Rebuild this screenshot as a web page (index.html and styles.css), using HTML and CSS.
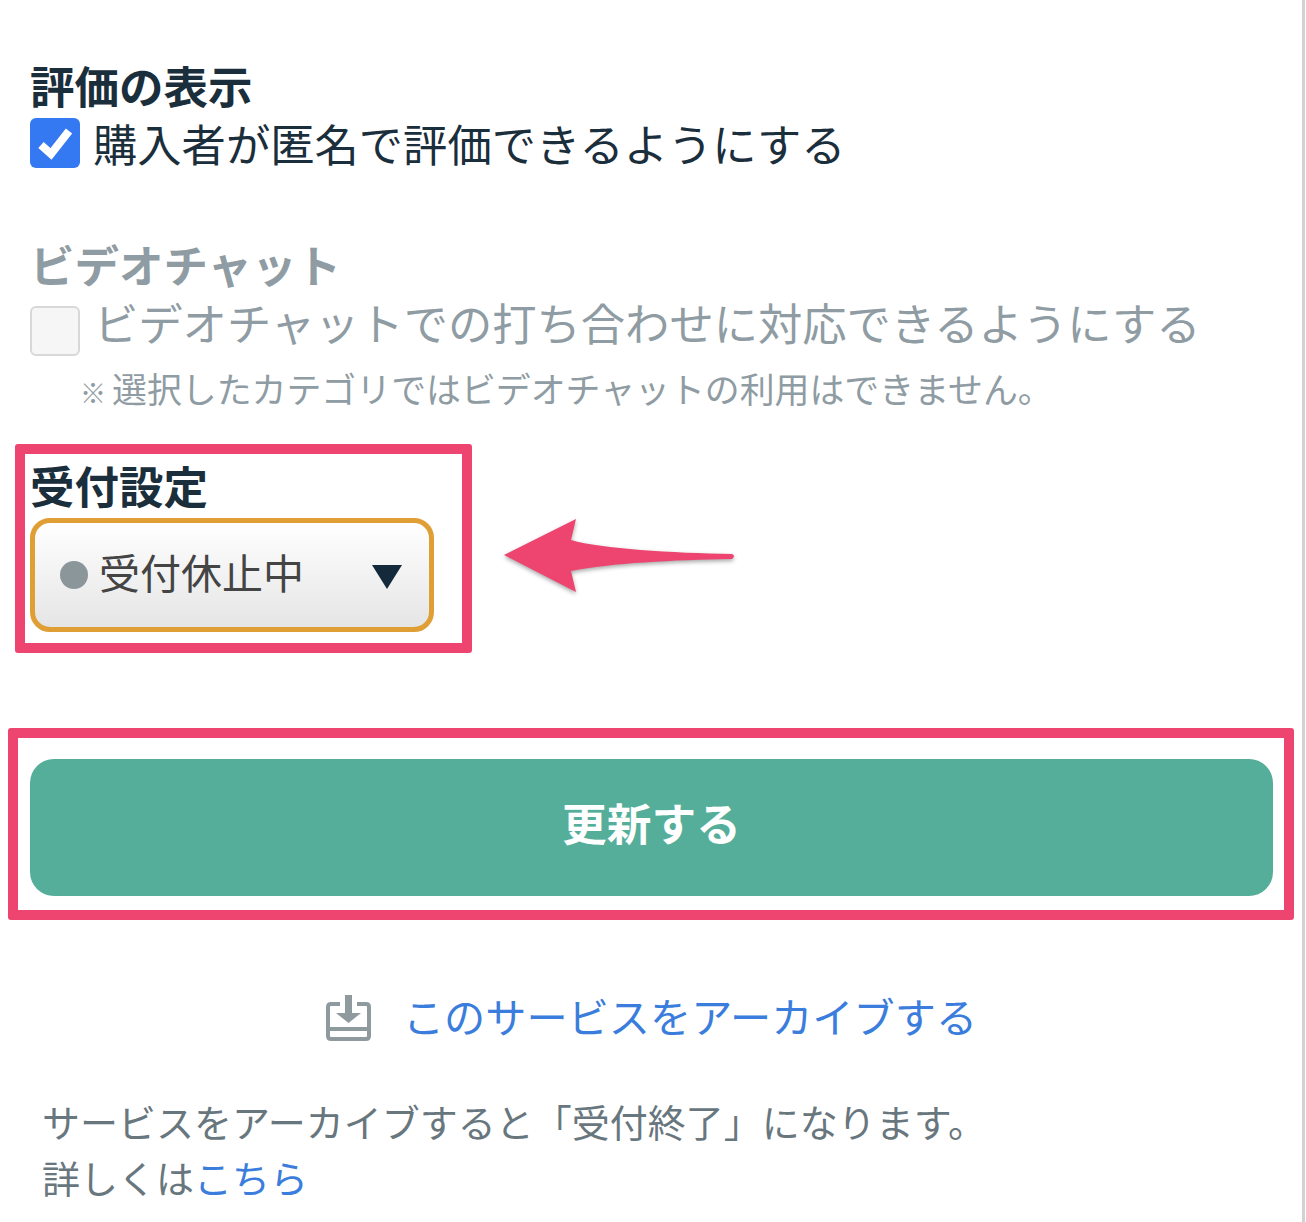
FILE: index.html
```html
<!DOCTYPE html>
<html lang="ja">
<head>
<meta charset="UTF-8">
<meta name="viewport" content="width=device-width, initial-scale=1.0">
<title>サービス編集</title>
<link rel="stylesheet" href="styles.css">
</head>
<body>
<div class="page">
    <section class="field field-review">
        <h2 class="field-title">評価の表示</h2>
        <div class="check-row">
            <span class="check check-on">
                <svg viewBox="0 0 50 50" width="50" height="50"><path d="M11 27 L21 36 L39 13" fill="none" stroke="#fff" stroke-width="8"/></svg>
            </span>
            <span class="check-label">購入者が匿名で評価できるようにする</span>
        </div>
    </section>

    <section class="field field-video">
        <h2 class="field-title">ビデオチャット</h2>
        <div class="check-row">
            <span class="check check-off"></span>
            <span class="check-label">ビデオチャットでの打ち合わせに対応できるようにする</span>
        </div>
        <p class="video-note"><span class="note-mark">※</span>選択したカテゴリではビデオチャットの利用はできません。</p>
    </section>

    <section class="mark-box status-box">
        <h2 class="field-title">受付設定</h2>
        <div class="status-select">
            <span class="status-dot"></span>
            <span class="status-text">受付休止中</span>
            <span class="status-caret"></span>
        </div>
    </section>

    <svg class="mark-arrow" viewBox="0 0 240 80" width="240" height="80">
        <path d="M2 36 L74 0 L69 21 C100 30 170 34 230 35 Q234 37 230 40 C170 41 110 44 69 52 L74 73 Z" fill="#ed4570"/>
    </svg>

    <div class="mark-box submit-box">
        <button class="submit-btn">更新する</button>
    </div>

    <a class="archive-link" href="#">
        <svg class="archive-icon" viewBox="0 0 45 46" width="45" height="46">
            <path d="M14 9 H5 Q2 9 2 12 V41 Q2 44 5 44 H40 Q43 44 43 41 V12 Q43 9 40 9 H31 M2 34 H43" fill="none" stroke="#8f9a9f" stroke-width="4"/>
            <path d="M19 0 H26 V18 H35 L22.5 28 L10 18 H19 Z" fill="#8f9a9f"/>
        </svg>
        <span class="archive-text">このサービスをアーカイブする</span>
    </a>

    <p class="archive-note">サービスをアーカイブすると「受付終了」になります。<br>詳しくは<a href="#">こちら</a></p>
</div>
</body>
</html>
```

FILE: styles.css
```css
body {
    margin: 0;
    background: #fff;
    color: #1a2e3b;
    font-family: "Noto Sans CJK JP", "Noto Sans", sans-serif;
}

.page {
    position: relative;
    box-sizing: border-box;
    width: 1305px;
    height: 1222px;
    padding-top: 58px;
    border-right: 3px solid #d2d2d2;
    overflow: hidden;
}

.field {
    padding-left: 30px;
}

.field-title {
    margin: 0 0 6px;
    font-size: 44.5px;
    font-weight: 700;
    line-height: 54px;
}

.check-row {
    display: flex;
    gap: 13px;
    height: 50px;
}

.check {
    box-sizing: border-box;
    flex: none;
    width: 50px;
    height: 50px;
    border-radius: 6px;
}

.check-on {
    background: #3579f2;
}

.check-on svg {
    display: block;
}

.check-off {
    margin-top: 9px;
    background: #f6f6f6;
    border: 2px solid #d8d8d8;
}

.check-label {
    font-size: 44.3px;
    line-height: 50px;
}

.field-video {
    margin-top: 69px;
    color: #8f9ca3;
}

.field-video .check-label {
    margin-left: 1px;
}

.video-note {
    margin: 18px 0 0 50px;
    font-size: 34.9px;
    line-height: 46px;
}

.note-mark {
    margin-right: 6px;
    font-size: 26px;
}

.mark-box {
    box-sizing: border-box;
    border: 10px solid #ed4570;
    border-radius: 3px;
}

.status-box {
    width: 457px;
    height: 209px;
    margin: 29px 0 0 15px;
    padding: 4px 0 0 5px;
}

.status-select {
    box-sizing: border-box;
    display: flex;
    align-items: center;
    width: 404px;
    height: 114px;
    padding: 0 27px 0 25px;
    border: 5px solid #e09f35;
    border-radius: 20px;
    background: linear-gradient(#fff, #e5e5e5);
    color: #444;
}

.status-dot {
    flex: none;
    width: 28px;
    height: 28px;
    margin-right: 11px;
    border-radius: 50%;
    background: #8b969b;
}

.status-text {
    flex: 1;
    padding-bottom: 8px;
    font-size: 41px;
}

.status-caret {
    width: 0;
    height: 0;
    margin-top: 4px;
    border-left: 15px solid transparent;
    border-right: 15px solid transparent;
    border-top: 24px solid #14293a;
}

.mark-arrow {
    position: absolute;
    left: 502px;
    top: 519px;
    filter: drop-shadow(0 2px 2px rgba(0, 0, 0, 0.35));
}

.submit-box {
    width: 1286px;
    height: 192px;
    margin: 75px 0 0 8px;
    padding: 21px 11px 0 12px;
}

.submit-btn {
    display: block;
    width: 100%;
    height: 137px;
    padding: 0 0 12px;
    border: none;
    border-radius: 24px;
    background: #54ae99;
    color: #fff;
    font-family: inherit;
    font-size: 44.7px;
    font-weight: 700;
    cursor: pointer;
}

.archive-link {
    display: flex;
    align-items: center;
    justify-content: center;
    gap: 32px;
    height: 46px;
    margin-top: 73px;
    padding-left: 1px;
    color: #3b7ddd;
    font-size: 41.2px;
    text-decoration: none;
}

.archive-icon {
    margin-top: 4px;
}

.archive-text {
    padding-bottom: 2px;
}

.archive-note {
    margin: 54px 0 0 42px;
    color: #68767e;
    font-size: 38px;
    line-height: 56px;
}

.archive-note a {
    color: #3b7ddd;
    text-decoration: none;
}
```
